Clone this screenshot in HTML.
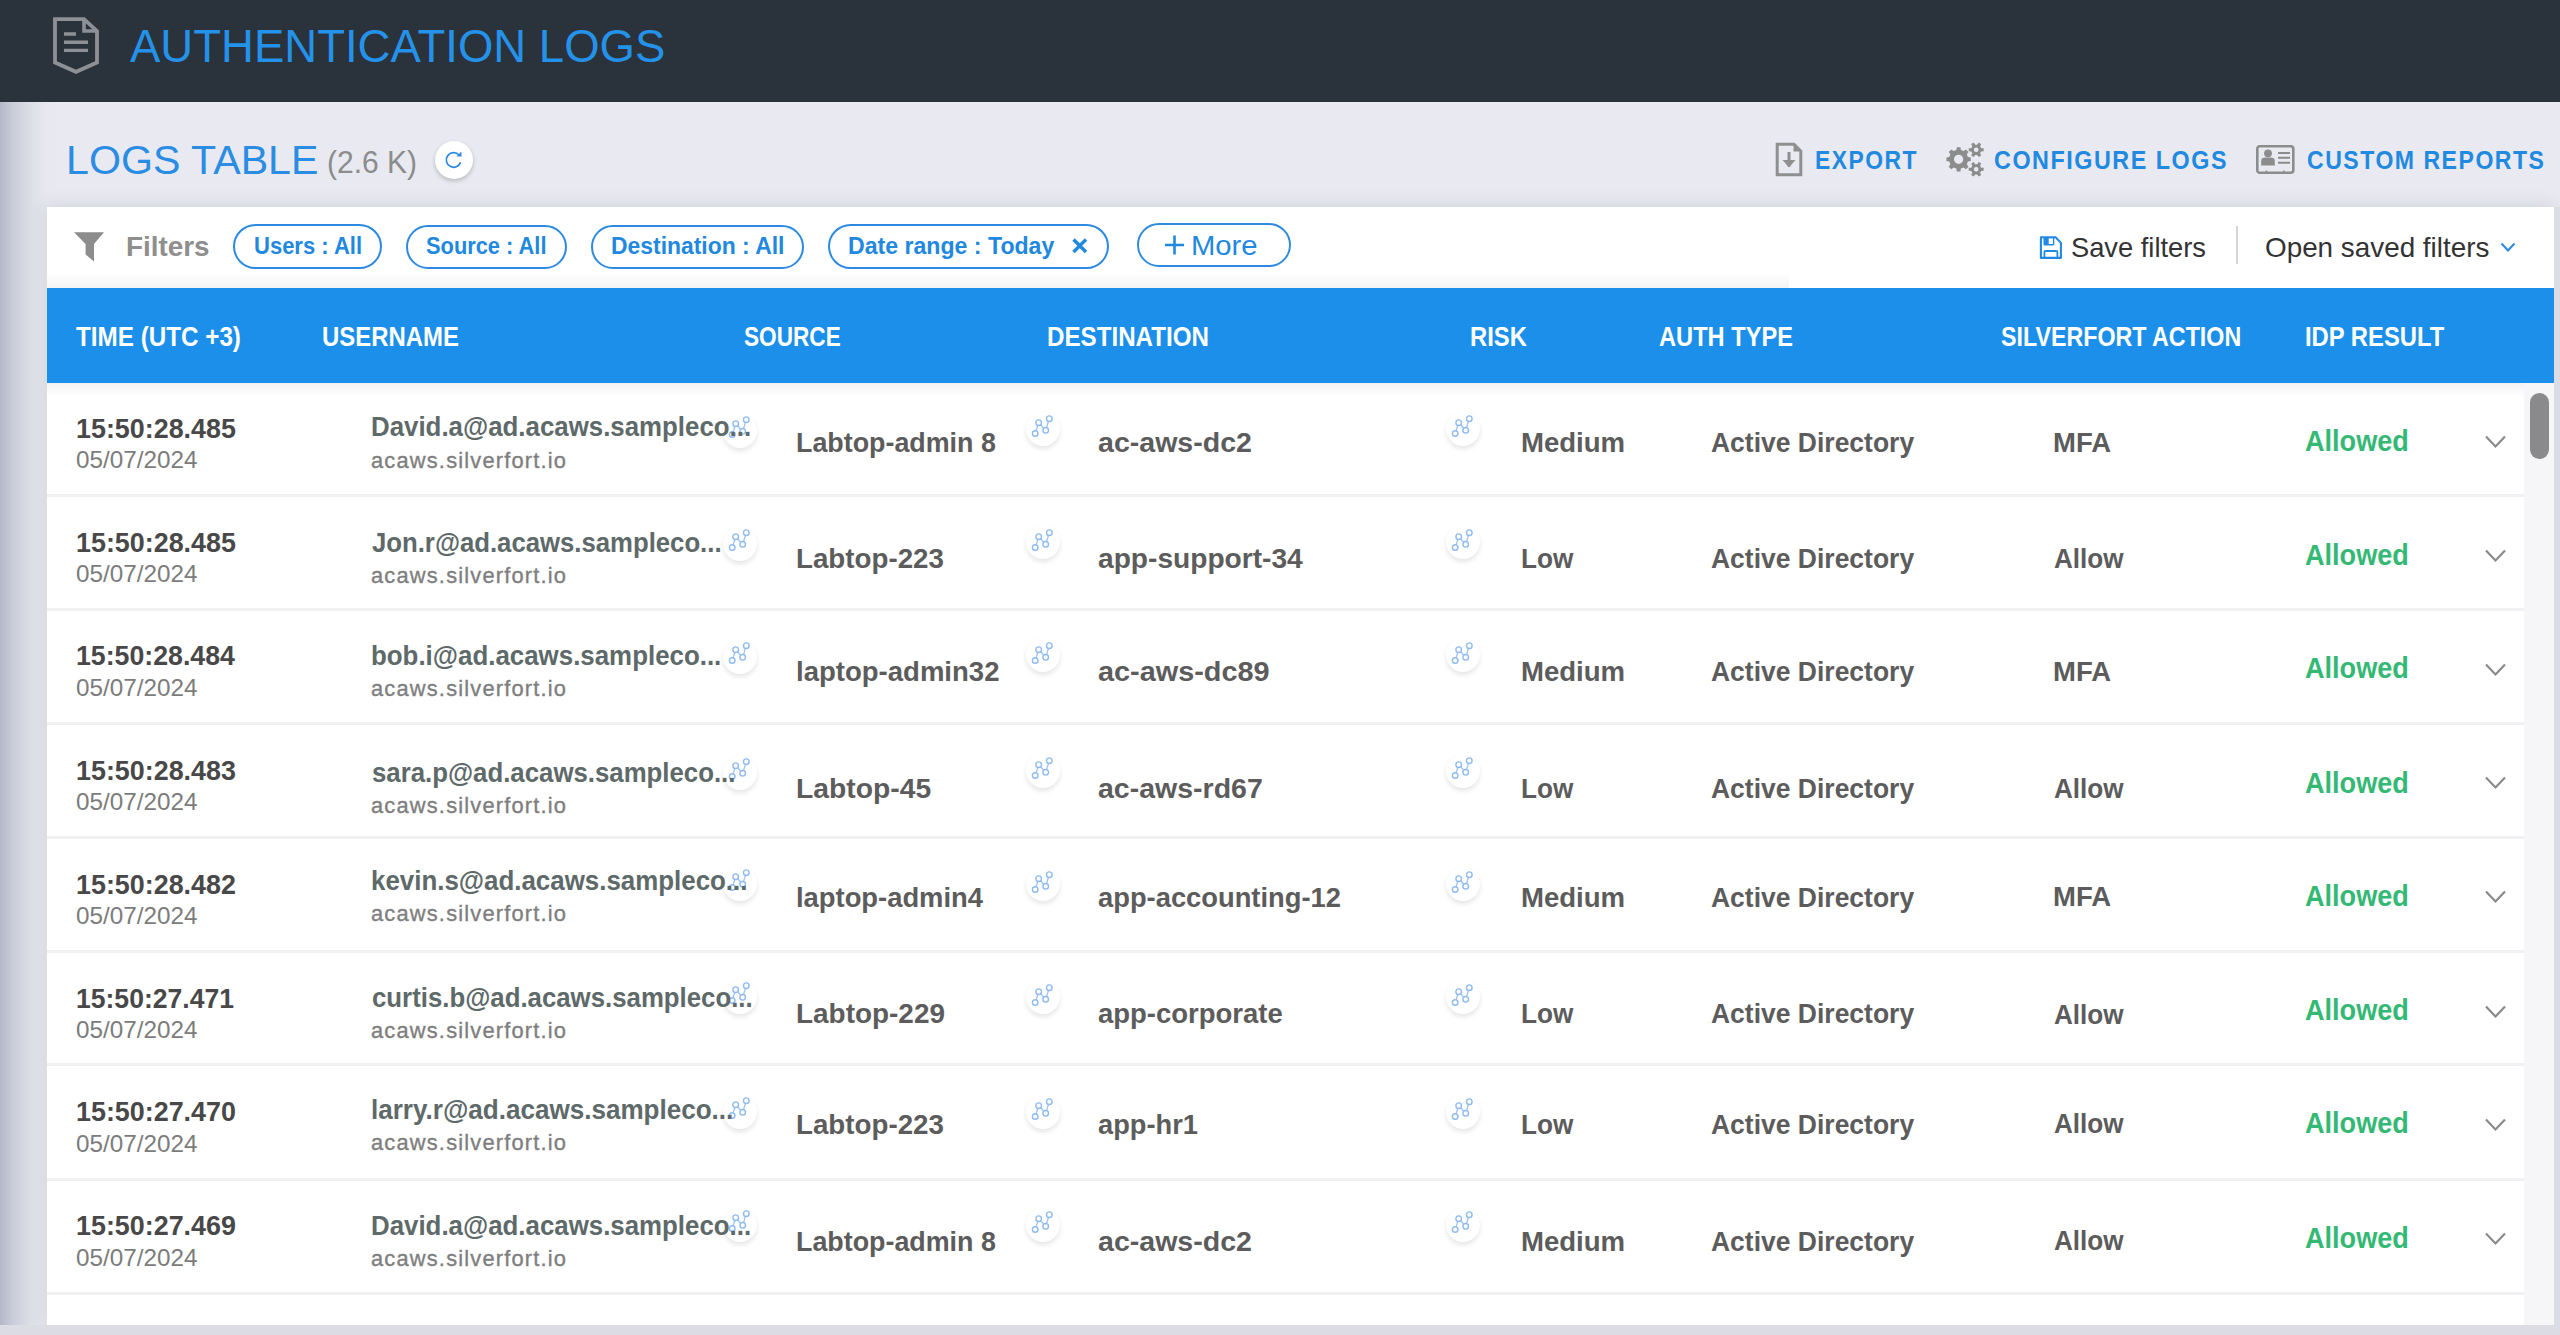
<!DOCTYPE html>
<html><head><meta charset="utf-8"><title>Authentication Logs</title>
<style>
html,body{margin:0;padding:0;width:2560px;height:1335px;overflow:hidden;}
body{position:relative;background:#e9eaf1;font-family:"Liberation Sans",sans-serif;}
.t{position:absolute;white-space:nowrap;transform-origin:0 0;font-family:"Liberation Sans",sans-serif;}
.abs{position:absolute;}
#topbar{position:absolute;left:0;top:0;width:2560px;height:102px;background:#2a323c;}
#leftgrad{position:absolute;left:0;top:102px;width:60px;height:1233px;background:linear-gradient(to right,#b3b7c7 0px,#c9ccd8 12px,#dcdee7 30px,#e8e9f0 48px,#e9eaf1 60px);}
#card{position:absolute;left:47px;top:207px;width:2507px;height:1118px;background:#ffffff;box-shadow:0 -2px 16px rgba(40,45,70,0.13);}
#fbshade{position:absolute;left:47px;top:272px;width:1742px;height:16px;background:linear-gradient(to bottom,rgba(0,0,0,0),rgba(0,0,0,0.045));}
#hshadow{position:absolute;left:47px;top:383px;width:2477px;height:14px;background:linear-gradient(to bottom,rgba(0,0,0,0.05),rgba(0,0,0,0));}
#belowcard{position:absolute;left:0;top:1325px;width:2560px;height:10px;background:#dcdde4;}
#rightcard{position:absolute;left:2554px;top:207px;width:6px;height:1128px;background:#dcdde4;}
#thead{position:absolute;left:47px;top:288px;width:2507px;height:95px;background:#1b8fea;}
.sep{position:absolute;left:47px;width:2477px;height:3px;background:#f0f1f3;}
#track{position:absolute;left:2524px;top:383px;width:30px;height:942px;background:#f6f6f9;}
#thumb{position:absolute;left:2530px;top:393px;width:19px;height:66px;border-radius:10px;background:#8a8a8c;}
.chip{position:absolute;box-sizing:border-box;border:2px solid #2d8ae0;border-radius:24px;}
.circ{position:absolute;border-radius:50%;background:#fff;}
</style></head><body>
<div id="topbar"></div>
<div id="leftgrad"></div>
<div id="card"></div>
<div id="belowcard"></div>
<div id="rightcard"></div>
<div id="fbshade"></div>
<div id="thead"></div>
<div id="hshadow"></div>
<div id="track"></div>
<div id="thumb"></div>
<div class="sep" style="top:494.2px"></div>
<div class="sep" style="top:608.1px"></div>
<div class="sep" style="top:721.8px"></div>
<div class="sep" style="top:836.2px"></div>
<div class="sep" style="top:949.5px"></div>
<div class="sep" style="top:1063.0px"></div>
<div class="sep" style="top:1178.4px"></div>
<div class="sep" style="top:1292.4px"></div>
<svg class="abs" style="left:50px;top:14px" width="54" height="64" viewBox="0 0 54 64">
<path d="M5 5.2 H34 L47 17 V48.5 L26 57.8 L5 48.5 Z" fill="none" stroke="#8d9196" stroke-width="3.8" stroke-linejoin="miter"/>
<path d="M34 5.2 V17 H47" fill="none" stroke="#8d9196" stroke-width="3.6"/>
<path d="M14 20 H26 M14 28.2 H38 M14 36.4 H38" stroke="#8d9196" stroke-width="3.4"/>
</svg>
<div class="circ" style="left:435px;top:141px;width:38px;height:38px;box-shadow:0 2px 4px rgba(0,0,0,0.22)"></div>
<svg class="abs" style="left:441px;top:147px" width="26" height="26" viewBox="0 0 26 26">
<path d="M19.6 15.2 A7.3 7.3 0 1 1 18.2 8.2" fill="none" stroke="#2d8ae0" stroke-width="1.7"/>
<path d="M15.5 9.5 L20.6 9.4 L20.3 4.6 Z" fill="#2d8ae0"/>
</svg>
<svg class="abs" style="left:1774px;top:141px" width="30" height="37" viewBox="0 0 30 37">
<path d="M3.2 3.2 H20 L26.8 10 V33.8 H3.2 Z" fill="none" stroke="#8f8f8f" stroke-width="3"/>
<path d="M19.5 3.2 L26.8 10.5 H19.5 Z" fill="#8f8f8f"/>
<path d="M15 11 V25.5" fill="none" stroke="#8f8f8f" stroke-width="3"/>
<path d="M8.5 19 L15 26.5 L21.5 19 Z" fill="#8f8f8f"/>
</svg>
<svg class="abs" style="left:1940px;top:138px" width="50" height="44" viewBox="0 0 50 44"><path d="M27.92,18.99 L30.77,19.51 L30.77,23.09 L27.92,23.61 L26.82,26.25 L28.47,28.64 L25.94,31.17 L23.55,29.52 L20.91,30.62 L20.39,33.47 L16.81,33.47 L16.29,30.62 L13.65,29.52 L11.26,31.17 L8.73,28.64 L10.38,26.25 L9.28,23.61 L6.43,23.09 L6.43,19.51 L9.28,18.99 L10.38,16.35 L8.73,13.96 L11.26,11.43 L13.65,13.08 L16.29,11.98 L16.81,9.13 L20.39,9.13 L20.91,11.98 L23.55,13.08 L25.94,11.43 L28.47,13.96 L26.82,16.35 Z M23.20,21.30 A4.6,4.6 0 1 0 14.00,21.30 A4.6,4.6 0 1 0 23.20,21.30 Z" fill="#8c8c8c" fill-rule="evenodd"/><path d="M41.13,10.14 L43.66,10.33 L43.66,13.27 L41.13,13.46 L40.10,15.24 L41.20,17.52 L38.65,18.99 L37.23,16.90 L35.17,16.90 L33.75,18.99 L31.20,17.52 L32.30,15.24 L31.27,13.46 L28.74,13.27 L28.74,10.33 L31.27,10.14 L32.30,8.36 L31.20,6.08 L33.75,4.61 L35.17,6.70 L37.23,6.70 L38.65,4.61 L41.20,6.08 L40.10,8.36 Z M38.50,11.80 A2.3,2.3 0 1 0 33.90,11.80 A2.3,2.3 0 1 0 38.50,11.80 Z" fill="#8c8c8c" fill-rule="evenodd"/><path d="M41.13,29.64 L43.66,29.83 L43.66,32.77 L41.13,32.96 L40.10,34.74 L41.20,37.02 L38.65,38.49 L37.23,36.40 L35.17,36.40 L33.75,38.49 L31.20,37.02 L32.30,34.74 L31.27,32.96 L28.74,32.77 L28.74,29.83 L31.27,29.64 L32.30,27.86 L31.20,25.58 L33.75,24.11 L35.17,26.20 L37.23,26.20 L38.65,24.11 L41.20,25.58 L40.10,27.86 Z M38.50,31.30 A2.3,2.3 0 1 0 33.90,31.30 A2.3,2.3 0 1 0 38.50,31.30 Z" fill="#8c8c8c" fill-rule="evenodd"/></svg>
<svg class="abs" style="left:2254px;top:143px" width="44" height="34" viewBox="0 0 44 34">
<rect x="3.3" y="3.3" width="36" height="26.5" rx="2.5" fill="none" stroke="#8c8c8c" stroke-width="2.6"/>
<circle cx="14" cy="10.3" r="3.9" fill="#8c8c8c"/>
<path d="M7.2 22.5 V18 Q7.2 14.4 11 14.4 H17 Q20.8 14.4 20.8 18 V22.5 Z" fill="#8c8c8c"/>
<path d="M24 10 H36 M24 14.8 H36 M24 19.8 H36" stroke="#8c8c8c" stroke-width="1.9"/>
<path d="M12.5 29.8 V27.5 M29.8 29.8 V27.5" stroke="#8c8c8c" stroke-width="1.6"/>
</svg>
<svg class="abs" style="left:72px;top:230px" width="34" height="34" viewBox="0 0 34 34">
<path d="M2 2.3 H32 L22 14 V31.5 L13.6 24.5 V14 Z" fill="#8c8c8c"/>
</svg>
<div class="chip" style="left:233.2px;top:224.2px;width:149.1px;height:44.9px"></div>
<div class="chip" style="left:405.8px;top:224.5px;width:161.5px;height:44.6px"></div>
<div class="chip" style="left:590.6px;top:224.5px;width:213.9px;height:44.6px"></div>
<div class="chip" style="left:828.0px;top:224.4px;width:281.4px;height:44.4px"></div>
<div class="chip" style="left:1136.9px;top:222.5px;width:154.4px;height:44.7px"></div>
<svg class="abs" style="left:1070px;top:237px" width="20" height="18" viewBox="0 0 20 18">
<path d="M3.5 2.5 L16 15 M16 2.5 L3.5 15" stroke="#2188e0" stroke-width="3.4"/>
</svg>
<svg class="abs" style="left:1163px;top:233px" width="23" height="24" viewBox="0 0 23 24">
<path d="M11.5 2.5 V21.5 M2 12 H21" stroke="#2188e0" stroke-width="2.6"/>
</svg>
<svg class="abs" style="left:2037px;top:234px" width="28" height="27" viewBox="0 0 28 27">
<path d="M3.9 3.3 H18.6 L23.9 8.9 V23.9 H3.9 Z" fill="none" stroke="#2188e6" stroke-width="2.1" stroke-linejoin="round"/>
<path d="M6.5 3.3 H17.3 V10.2 Q17.3 11.6 15.9 11.6 H7.9 Q6.5 11.6 6.5 10.2 Z" fill="#2188e6"/>
<rect x="11.7" y="4.4" width="4.2" height="5.6" fill="#fff"/>
<path d="M7.4 23.9 V18.2 Q7.4 17 8.6 17 H19.2 Q20.4 17 20.4 18.2 V23.9" fill="none" stroke="#2188e6" stroke-width="1.8"/>
</svg>
<div class="abs" style="left:2235.5px;top:226px;width:2px;height:38px;background:#d6d6d6"></div>
<svg class="abs" style="left:2499px;top:240px" width="18" height="15" viewBox="0 0 18 15">
<path d="M2.5 3.5 L9 10.5 L15.5 3.5" fill="none" stroke="#2d8ae0" stroke-width="2"/>
</svg>
<div class="circ" style="left:722.7px;top:413.8px;width:34px;height:34px;box-shadow:0 3px 5px rgba(0,0,0,0.10);z-index:1"></div>
<svg class="abs" style="left:724.7px;top:413.8px;z-index:2" width="30" height="28" viewBox="0 0 30 28"><path d="M7.2 20.5 L10.7 9.7 L17.7 17.3 L21.3 5.7" fill="none" stroke="#9dc4f3" stroke-width="1.3"/>
<circle cx="7.2" cy="20.5" r="2.8" fill="#fff" stroke="#8fbbf1" stroke-width="1.4"/>
<circle cx="10.7" cy="9.7" r="2.8" fill="#fff" stroke="#8fbbf1" stroke-width="1.4"/>
<circle cx="17.7" cy="17.3" r="2.8" fill="#fff" stroke="#8fbbf1" stroke-width="1.4"/>
<circle cx="21.3" cy="5.7" r="2.8" fill="#fff" stroke="#8fbbf1" stroke-width="1.4"/></svg>
<div class="circ" style="left:1025.6px;top:411.8px;width:34px;height:34px;box-shadow:0 3px 5px rgba(0,0,0,0.10);z-index:1"></div>
<svg class="abs" style="left:1027.6px;top:413.3px;z-index:2" width="30" height="28" viewBox="0 0 30 28"><path d="M7.2 20.5 L10.7 9.7 L17.7 17.3 L21.3 5.7" fill="none" stroke="#9dc4f3" stroke-width="1.3"/>
<circle cx="7.2" cy="20.5" r="2.8" fill="#fff" stroke="#8fbbf1" stroke-width="1.4"/>
<circle cx="10.7" cy="9.7" r="2.8" fill="#fff" stroke="#8fbbf1" stroke-width="1.4"/>
<circle cx="17.7" cy="17.3" r="2.8" fill="#fff" stroke="#8fbbf1" stroke-width="1.4"/>
<circle cx="21.3" cy="5.7" r="2.8" fill="#fff" stroke="#8fbbf1" stroke-width="1.4"/></svg>
<div class="circ" style="left:1445.8px;top:411.8px;width:34px;height:34px;box-shadow:0 3px 5px rgba(0,0,0,0.10);z-index:1"></div>
<svg class="abs" style="left:1447.8px;top:413.3px;z-index:2" width="30" height="28" viewBox="0 0 30 28"><path d="M7.2 20.5 L10.7 9.7 L17.7 17.3 L21.3 5.7" fill="none" stroke="#9dc4f3" stroke-width="1.3"/>
<circle cx="7.2" cy="20.5" r="2.8" fill="#fff" stroke="#8fbbf1" stroke-width="1.4"/>
<circle cx="10.7" cy="9.7" r="2.8" fill="#fff" stroke="#8fbbf1" stroke-width="1.4"/>
<circle cx="17.7" cy="17.3" r="2.8" fill="#fff" stroke="#8fbbf1" stroke-width="1.4"/>
<circle cx="21.3" cy="5.7" r="2.8" fill="#fff" stroke="#8fbbf1" stroke-width="1.4"/></svg>
<svg class="abs" style="left:2483px;top:432.5px" width="25" height="18" viewBox="0 0 25 18"><path d="M3 3.5 L12.5 13.5 L22 3.5" fill="none" stroke="#8a8a8a" stroke-width="2.2"/></svg>
<div class="circ" style="left:722.7px;top:527.1px;width:34px;height:34px;box-shadow:0 3px 5px rgba(0,0,0,0.10);z-index:1"></div>
<svg class="abs" style="left:724.7px;top:527.1px;z-index:2" width="30" height="28" viewBox="0 0 30 28"><path d="M7.2 20.5 L10.7 9.7 L17.7 17.3 L21.3 5.7" fill="none" stroke="#9dc4f3" stroke-width="1.3"/>
<circle cx="7.2" cy="20.5" r="2.8" fill="#fff" stroke="#8fbbf1" stroke-width="1.4"/>
<circle cx="10.7" cy="9.7" r="2.8" fill="#fff" stroke="#8fbbf1" stroke-width="1.4"/>
<circle cx="17.7" cy="17.3" r="2.8" fill="#fff" stroke="#8fbbf1" stroke-width="1.4"/>
<circle cx="21.3" cy="5.7" r="2.8" fill="#fff" stroke="#8fbbf1" stroke-width="1.4"/></svg>
<div class="circ" style="left:1025.6px;top:525.1px;width:34px;height:34px;box-shadow:0 3px 5px rgba(0,0,0,0.10);z-index:1"></div>
<svg class="abs" style="left:1027.6px;top:526.6px;z-index:2" width="30" height="28" viewBox="0 0 30 28"><path d="M7.2 20.5 L10.7 9.7 L17.7 17.3 L21.3 5.7" fill="none" stroke="#9dc4f3" stroke-width="1.3"/>
<circle cx="7.2" cy="20.5" r="2.8" fill="#fff" stroke="#8fbbf1" stroke-width="1.4"/>
<circle cx="10.7" cy="9.7" r="2.8" fill="#fff" stroke="#8fbbf1" stroke-width="1.4"/>
<circle cx="17.7" cy="17.3" r="2.8" fill="#fff" stroke="#8fbbf1" stroke-width="1.4"/>
<circle cx="21.3" cy="5.7" r="2.8" fill="#fff" stroke="#8fbbf1" stroke-width="1.4"/></svg>
<div class="circ" style="left:1445.8px;top:525.1px;width:34px;height:34px;box-shadow:0 3px 5px rgba(0,0,0,0.10);z-index:1"></div>
<svg class="abs" style="left:1447.8px;top:526.6px;z-index:2" width="30" height="28" viewBox="0 0 30 28"><path d="M7.2 20.5 L10.7 9.7 L17.7 17.3 L21.3 5.7" fill="none" stroke="#9dc4f3" stroke-width="1.3"/>
<circle cx="7.2" cy="20.5" r="2.8" fill="#fff" stroke="#8fbbf1" stroke-width="1.4"/>
<circle cx="10.7" cy="9.7" r="2.8" fill="#fff" stroke="#8fbbf1" stroke-width="1.4"/>
<circle cx="17.7" cy="17.3" r="2.8" fill="#fff" stroke="#8fbbf1" stroke-width="1.4"/>
<circle cx="21.3" cy="5.7" r="2.8" fill="#fff" stroke="#8fbbf1" stroke-width="1.4"/></svg>
<svg class="abs" style="left:2483px;top:546.9px" width="25" height="18" viewBox="0 0 25 18"><path d="M3 3.5 L12.5 13.5 L22 3.5" fill="none" stroke="#8a8a8a" stroke-width="2.2"/></svg>
<div class="circ" style="left:722.7px;top:640.4px;width:34px;height:34px;box-shadow:0 3px 5px rgba(0,0,0,0.10);z-index:1"></div>
<svg class="abs" style="left:724.7px;top:640.4px;z-index:2" width="30" height="28" viewBox="0 0 30 28"><path d="M7.2 20.5 L10.7 9.7 L17.7 17.3 L21.3 5.7" fill="none" stroke="#9dc4f3" stroke-width="1.3"/>
<circle cx="7.2" cy="20.5" r="2.8" fill="#fff" stroke="#8fbbf1" stroke-width="1.4"/>
<circle cx="10.7" cy="9.7" r="2.8" fill="#fff" stroke="#8fbbf1" stroke-width="1.4"/>
<circle cx="17.7" cy="17.3" r="2.8" fill="#fff" stroke="#8fbbf1" stroke-width="1.4"/>
<circle cx="21.3" cy="5.7" r="2.8" fill="#fff" stroke="#8fbbf1" stroke-width="1.4"/></svg>
<div class="circ" style="left:1025.6px;top:638.4px;width:34px;height:34px;box-shadow:0 3px 5px rgba(0,0,0,0.10);z-index:1"></div>
<svg class="abs" style="left:1027.6px;top:639.9px;z-index:2" width="30" height="28" viewBox="0 0 30 28"><path d="M7.2 20.5 L10.7 9.7 L17.7 17.3 L21.3 5.7" fill="none" stroke="#9dc4f3" stroke-width="1.3"/>
<circle cx="7.2" cy="20.5" r="2.8" fill="#fff" stroke="#8fbbf1" stroke-width="1.4"/>
<circle cx="10.7" cy="9.7" r="2.8" fill="#fff" stroke="#8fbbf1" stroke-width="1.4"/>
<circle cx="17.7" cy="17.3" r="2.8" fill="#fff" stroke="#8fbbf1" stroke-width="1.4"/>
<circle cx="21.3" cy="5.7" r="2.8" fill="#fff" stroke="#8fbbf1" stroke-width="1.4"/></svg>
<div class="circ" style="left:1445.8px;top:638.4px;width:34px;height:34px;box-shadow:0 3px 5px rgba(0,0,0,0.10);z-index:1"></div>
<svg class="abs" style="left:1447.8px;top:639.9px;z-index:2" width="30" height="28" viewBox="0 0 30 28"><path d="M7.2 20.5 L10.7 9.7 L17.7 17.3 L21.3 5.7" fill="none" stroke="#9dc4f3" stroke-width="1.3"/>
<circle cx="7.2" cy="20.5" r="2.8" fill="#fff" stroke="#8fbbf1" stroke-width="1.4"/>
<circle cx="10.7" cy="9.7" r="2.8" fill="#fff" stroke="#8fbbf1" stroke-width="1.4"/>
<circle cx="17.7" cy="17.3" r="2.8" fill="#fff" stroke="#8fbbf1" stroke-width="1.4"/>
<circle cx="21.3" cy="5.7" r="2.8" fill="#fff" stroke="#8fbbf1" stroke-width="1.4"/></svg>
<svg class="abs" style="left:2483px;top:660.6px" width="25" height="18" viewBox="0 0 25 18"><path d="M3 3.5 L12.5 13.5 L22 3.5" fill="none" stroke="#8a8a8a" stroke-width="2.2"/></svg>
<div class="circ" style="left:722.7px;top:755.8px;width:34px;height:34px;box-shadow:0 3px 5px rgba(0,0,0,0.10);z-index:1"></div>
<svg class="abs" style="left:724.7px;top:755.8px;z-index:2" width="30" height="28" viewBox="0 0 30 28"><path d="M7.2 20.5 L10.7 9.7 L17.7 17.3 L21.3 5.7" fill="none" stroke="#9dc4f3" stroke-width="1.3"/>
<circle cx="7.2" cy="20.5" r="2.8" fill="#fff" stroke="#8fbbf1" stroke-width="1.4"/>
<circle cx="10.7" cy="9.7" r="2.8" fill="#fff" stroke="#8fbbf1" stroke-width="1.4"/>
<circle cx="17.7" cy="17.3" r="2.8" fill="#fff" stroke="#8fbbf1" stroke-width="1.4"/>
<circle cx="21.3" cy="5.7" r="2.8" fill="#fff" stroke="#8fbbf1" stroke-width="1.4"/></svg>
<div class="circ" style="left:1025.6px;top:753.8px;width:34px;height:34px;box-shadow:0 3px 5px rgba(0,0,0,0.10);z-index:1"></div>
<svg class="abs" style="left:1027.6px;top:755.3px;z-index:2" width="30" height="28" viewBox="0 0 30 28"><path d="M7.2 20.5 L10.7 9.7 L17.7 17.3 L21.3 5.7" fill="none" stroke="#9dc4f3" stroke-width="1.3"/>
<circle cx="7.2" cy="20.5" r="2.8" fill="#fff" stroke="#8fbbf1" stroke-width="1.4"/>
<circle cx="10.7" cy="9.7" r="2.8" fill="#fff" stroke="#8fbbf1" stroke-width="1.4"/>
<circle cx="17.7" cy="17.3" r="2.8" fill="#fff" stroke="#8fbbf1" stroke-width="1.4"/>
<circle cx="21.3" cy="5.7" r="2.8" fill="#fff" stroke="#8fbbf1" stroke-width="1.4"/></svg>
<div class="circ" style="left:1445.8px;top:753.8px;width:34px;height:34px;box-shadow:0 3px 5px rgba(0,0,0,0.10);z-index:1"></div>
<svg class="abs" style="left:1447.8px;top:755.3px;z-index:2" width="30" height="28" viewBox="0 0 30 28"><path d="M7.2 20.5 L10.7 9.7 L17.7 17.3 L21.3 5.7" fill="none" stroke="#9dc4f3" stroke-width="1.3"/>
<circle cx="7.2" cy="20.5" r="2.8" fill="#fff" stroke="#8fbbf1" stroke-width="1.4"/>
<circle cx="10.7" cy="9.7" r="2.8" fill="#fff" stroke="#8fbbf1" stroke-width="1.4"/>
<circle cx="17.7" cy="17.3" r="2.8" fill="#fff" stroke="#8fbbf1" stroke-width="1.4"/>
<circle cx="21.3" cy="5.7" r="2.8" fill="#fff" stroke="#8fbbf1" stroke-width="1.4"/></svg>
<svg class="abs" style="left:2483px;top:774.3px" width="25" height="18" viewBox="0 0 25 18"><path d="M3 3.5 L12.5 13.5 L22 3.5" fill="none" stroke="#8a8a8a" stroke-width="2.2"/></svg>
<div class="circ" style="left:722.7px;top:867.1px;width:34px;height:34px;box-shadow:0 3px 5px rgba(0,0,0,0.10);z-index:1"></div>
<svg class="abs" style="left:724.7px;top:867.1px;z-index:2" width="30" height="28" viewBox="0 0 30 28"><path d="M7.2 20.5 L10.7 9.7 L17.7 17.3 L21.3 5.7" fill="none" stroke="#9dc4f3" stroke-width="1.3"/>
<circle cx="7.2" cy="20.5" r="2.8" fill="#fff" stroke="#8fbbf1" stroke-width="1.4"/>
<circle cx="10.7" cy="9.7" r="2.8" fill="#fff" stroke="#8fbbf1" stroke-width="1.4"/>
<circle cx="17.7" cy="17.3" r="2.8" fill="#fff" stroke="#8fbbf1" stroke-width="1.4"/>
<circle cx="21.3" cy="5.7" r="2.8" fill="#fff" stroke="#8fbbf1" stroke-width="1.4"/></svg>
<div class="circ" style="left:1025.6px;top:867.1px;width:34px;height:34px;box-shadow:0 3px 5px rgba(0,0,0,0.10);z-index:1"></div>
<svg class="abs" style="left:1027.6px;top:868.6px;z-index:2" width="30" height="28" viewBox="0 0 30 28"><path d="M7.2 20.5 L10.7 9.7 L17.7 17.3 L21.3 5.7" fill="none" stroke="#9dc4f3" stroke-width="1.3"/>
<circle cx="7.2" cy="20.5" r="2.8" fill="#fff" stroke="#8fbbf1" stroke-width="1.4"/>
<circle cx="10.7" cy="9.7" r="2.8" fill="#fff" stroke="#8fbbf1" stroke-width="1.4"/>
<circle cx="17.7" cy="17.3" r="2.8" fill="#fff" stroke="#8fbbf1" stroke-width="1.4"/>
<circle cx="21.3" cy="5.7" r="2.8" fill="#fff" stroke="#8fbbf1" stroke-width="1.4"/></svg>
<div class="circ" style="left:1445.8px;top:867.1px;width:34px;height:34px;box-shadow:0 3px 5px rgba(0,0,0,0.10);z-index:1"></div>
<svg class="abs" style="left:1447.8px;top:868.6px;z-index:2" width="30" height="28" viewBox="0 0 30 28"><path d="M7.2 20.5 L10.7 9.7 L17.7 17.3 L21.3 5.7" fill="none" stroke="#9dc4f3" stroke-width="1.3"/>
<circle cx="7.2" cy="20.5" r="2.8" fill="#fff" stroke="#8fbbf1" stroke-width="1.4"/>
<circle cx="10.7" cy="9.7" r="2.8" fill="#fff" stroke="#8fbbf1" stroke-width="1.4"/>
<circle cx="17.7" cy="17.3" r="2.8" fill="#fff" stroke="#8fbbf1" stroke-width="1.4"/>
<circle cx="21.3" cy="5.7" r="2.8" fill="#fff" stroke="#8fbbf1" stroke-width="1.4"/></svg>
<svg class="abs" style="left:2483px;top:888.0px" width="25" height="18" viewBox="0 0 25 18"><path d="M3 3.5 L12.5 13.5 L22 3.5" fill="none" stroke="#8a8a8a" stroke-width="2.2"/></svg>
<div class="circ" style="left:722.7px;top:980.4px;width:34px;height:34px;box-shadow:0 3px 5px rgba(0,0,0,0.10);z-index:1"></div>
<svg class="abs" style="left:724.7px;top:980.4px;z-index:2" width="30" height="28" viewBox="0 0 30 28"><path d="M7.2 20.5 L10.7 9.7 L17.7 17.3 L21.3 5.7" fill="none" stroke="#9dc4f3" stroke-width="1.3"/>
<circle cx="7.2" cy="20.5" r="2.8" fill="#fff" stroke="#8fbbf1" stroke-width="1.4"/>
<circle cx="10.7" cy="9.7" r="2.8" fill="#fff" stroke="#8fbbf1" stroke-width="1.4"/>
<circle cx="17.7" cy="17.3" r="2.8" fill="#fff" stroke="#8fbbf1" stroke-width="1.4"/>
<circle cx="21.3" cy="5.7" r="2.8" fill="#fff" stroke="#8fbbf1" stroke-width="1.4"/></svg>
<div class="circ" style="left:1025.6px;top:980.4px;width:34px;height:34px;box-shadow:0 3px 5px rgba(0,0,0,0.10);z-index:1"></div>
<svg class="abs" style="left:1027.6px;top:981.9px;z-index:2" width="30" height="28" viewBox="0 0 30 28"><path d="M7.2 20.5 L10.7 9.7 L17.7 17.3 L21.3 5.7" fill="none" stroke="#9dc4f3" stroke-width="1.3"/>
<circle cx="7.2" cy="20.5" r="2.8" fill="#fff" stroke="#8fbbf1" stroke-width="1.4"/>
<circle cx="10.7" cy="9.7" r="2.8" fill="#fff" stroke="#8fbbf1" stroke-width="1.4"/>
<circle cx="17.7" cy="17.3" r="2.8" fill="#fff" stroke="#8fbbf1" stroke-width="1.4"/>
<circle cx="21.3" cy="5.7" r="2.8" fill="#fff" stroke="#8fbbf1" stroke-width="1.4"/></svg>
<div class="circ" style="left:1445.8px;top:980.4px;width:34px;height:34px;box-shadow:0 3px 5px rgba(0,0,0,0.10);z-index:1"></div>
<svg class="abs" style="left:1447.8px;top:981.9px;z-index:2" width="30" height="28" viewBox="0 0 30 28"><path d="M7.2 20.5 L10.7 9.7 L17.7 17.3 L21.3 5.7" fill="none" stroke="#9dc4f3" stroke-width="1.3"/>
<circle cx="7.2" cy="20.5" r="2.8" fill="#fff" stroke="#8fbbf1" stroke-width="1.4"/>
<circle cx="10.7" cy="9.7" r="2.8" fill="#fff" stroke="#8fbbf1" stroke-width="1.4"/>
<circle cx="17.7" cy="17.3" r="2.8" fill="#fff" stroke="#8fbbf1" stroke-width="1.4"/>
<circle cx="21.3" cy="5.7" r="2.8" fill="#fff" stroke="#8fbbf1" stroke-width="1.4"/></svg>
<svg class="abs" style="left:2483px;top:1002.5px" width="25" height="18" viewBox="0 0 25 18"><path d="M3 3.5 L12.5 13.5 L22 3.5" fill="none" stroke="#8a8a8a" stroke-width="2.2"/></svg>
<div class="circ" style="left:722.7px;top:1094.5px;width:34px;height:34px;box-shadow:0 3px 5px rgba(0,0,0,0.10);z-index:1"></div>
<svg class="abs" style="left:724.7px;top:1094.5px;z-index:2" width="30" height="28" viewBox="0 0 30 28"><path d="M7.2 20.5 L10.7 9.7 L17.7 17.3 L21.3 5.7" fill="none" stroke="#9dc4f3" stroke-width="1.3"/>
<circle cx="7.2" cy="20.5" r="2.8" fill="#fff" stroke="#8fbbf1" stroke-width="1.4"/>
<circle cx="10.7" cy="9.7" r="2.8" fill="#fff" stroke="#8fbbf1" stroke-width="1.4"/>
<circle cx="17.7" cy="17.3" r="2.8" fill="#fff" stroke="#8fbbf1" stroke-width="1.4"/>
<circle cx="21.3" cy="5.7" r="2.8" fill="#fff" stroke="#8fbbf1" stroke-width="1.4"/></svg>
<div class="circ" style="left:1025.6px;top:1094.5px;width:34px;height:34px;box-shadow:0 3px 5px rgba(0,0,0,0.10);z-index:1"></div>
<svg class="abs" style="left:1027.6px;top:1096.0px;z-index:2" width="30" height="28" viewBox="0 0 30 28"><path d="M7.2 20.5 L10.7 9.7 L17.7 17.3 L21.3 5.7" fill="none" stroke="#9dc4f3" stroke-width="1.3"/>
<circle cx="7.2" cy="20.5" r="2.8" fill="#fff" stroke="#8fbbf1" stroke-width="1.4"/>
<circle cx="10.7" cy="9.7" r="2.8" fill="#fff" stroke="#8fbbf1" stroke-width="1.4"/>
<circle cx="17.7" cy="17.3" r="2.8" fill="#fff" stroke="#8fbbf1" stroke-width="1.4"/>
<circle cx="21.3" cy="5.7" r="2.8" fill="#fff" stroke="#8fbbf1" stroke-width="1.4"/></svg>
<div class="circ" style="left:1445.8px;top:1094.5px;width:34px;height:34px;box-shadow:0 3px 5px rgba(0,0,0,0.10);z-index:1"></div>
<svg class="abs" style="left:1447.8px;top:1096.0px;z-index:2" width="30" height="28" viewBox="0 0 30 28"><path d="M7.2 20.5 L10.7 9.7 L17.7 17.3 L21.3 5.7" fill="none" stroke="#9dc4f3" stroke-width="1.3"/>
<circle cx="7.2" cy="20.5" r="2.8" fill="#fff" stroke="#8fbbf1" stroke-width="1.4"/>
<circle cx="10.7" cy="9.7" r="2.8" fill="#fff" stroke="#8fbbf1" stroke-width="1.4"/>
<circle cx="17.7" cy="17.3" r="2.8" fill="#fff" stroke="#8fbbf1" stroke-width="1.4"/>
<circle cx="21.3" cy="5.7" r="2.8" fill="#fff" stroke="#8fbbf1" stroke-width="1.4"/></svg>
<svg class="abs" style="left:2483px;top:1115.8px" width="25" height="18" viewBox="0 0 25 18"><path d="M3 3.5 L12.5 13.5 L22 3.5" fill="none" stroke="#8a8a8a" stroke-width="2.2"/></svg>
<div class="circ" style="left:722.7px;top:1207.9px;width:34px;height:34px;box-shadow:0 3px 5px rgba(0,0,0,0.10);z-index:1"></div>
<svg class="abs" style="left:724.7px;top:1207.9px;z-index:2" width="30" height="28" viewBox="0 0 30 28"><path d="M7.2 20.5 L10.7 9.7 L17.7 17.3 L21.3 5.7" fill="none" stroke="#9dc4f3" stroke-width="1.3"/>
<circle cx="7.2" cy="20.5" r="2.8" fill="#fff" stroke="#8fbbf1" stroke-width="1.4"/>
<circle cx="10.7" cy="9.7" r="2.8" fill="#fff" stroke="#8fbbf1" stroke-width="1.4"/>
<circle cx="17.7" cy="17.3" r="2.8" fill="#fff" stroke="#8fbbf1" stroke-width="1.4"/>
<circle cx="21.3" cy="5.7" r="2.8" fill="#fff" stroke="#8fbbf1" stroke-width="1.4"/></svg>
<div class="circ" style="left:1025.6px;top:1207.9px;width:34px;height:34px;box-shadow:0 3px 5px rgba(0,0,0,0.10);z-index:1"></div>
<svg class="abs" style="left:1027.6px;top:1209.4px;z-index:2" width="30" height="28" viewBox="0 0 30 28"><path d="M7.2 20.5 L10.7 9.7 L17.7 17.3 L21.3 5.7" fill="none" stroke="#9dc4f3" stroke-width="1.3"/>
<circle cx="7.2" cy="20.5" r="2.8" fill="#fff" stroke="#8fbbf1" stroke-width="1.4"/>
<circle cx="10.7" cy="9.7" r="2.8" fill="#fff" stroke="#8fbbf1" stroke-width="1.4"/>
<circle cx="17.7" cy="17.3" r="2.8" fill="#fff" stroke="#8fbbf1" stroke-width="1.4"/>
<circle cx="21.3" cy="5.7" r="2.8" fill="#fff" stroke="#8fbbf1" stroke-width="1.4"/></svg>
<div class="circ" style="left:1445.8px;top:1207.9px;width:34px;height:34px;box-shadow:0 3px 5px rgba(0,0,0,0.10);z-index:1"></div>
<svg class="abs" style="left:1447.8px;top:1209.4px;z-index:2" width="30" height="28" viewBox="0 0 30 28"><path d="M7.2 20.5 L10.7 9.7 L17.7 17.3 L21.3 5.7" fill="none" stroke="#9dc4f3" stroke-width="1.3"/>
<circle cx="7.2" cy="20.5" r="2.8" fill="#fff" stroke="#8fbbf1" stroke-width="1.4"/>
<circle cx="10.7" cy="9.7" r="2.8" fill="#fff" stroke="#8fbbf1" stroke-width="1.4"/>
<circle cx="17.7" cy="17.3" r="2.8" fill="#fff" stroke="#8fbbf1" stroke-width="1.4"/>
<circle cx="21.3" cy="5.7" r="2.8" fill="#fff" stroke="#8fbbf1" stroke-width="1.4"/></svg>
<svg class="abs" style="left:2483px;top:1230.2px" width="25" height="18" viewBox="0 0 25 18"><path d="M3 3.5 L12.5 13.5 L22 3.5" fill="none" stroke="#8a8a8a" stroke-width="2.2"/></svg>
<div class="t" style="left:129.50px;top:23.00px;font-size:46.5px;line-height:46.5px;font-weight:400;color:#2592e9;transform:scaleX(0.9789);">AUTHENTICATION LOGS</div>
<div class="t" style="left:65.69px;top:139.50px;font-size:41px;line-height:41px;font-weight:400;color:#2a8ce2;transform:scaleX(1.0040);">LOGS TABLE</div>
<div class="t" style="left:327.03px;top:146.60px;font-size:30.5px;line-height:30.5px;font-weight:400;color:#8c8c8c;transform:scaleX(0.9841);">(2.6 K)</div>
<div class="t" style="left:1815.24px;top:147.00px;font-size:26px;line-height:26px;font-weight:700;color:#2189e0;letter-spacing:1.7px;transform:scaleX(0.8796);">EXPORT</div>
<div class="t" style="left:1994.10px;top:147.30px;font-size:26px;line-height:26px;font-weight:700;color:#2189e0;letter-spacing:1.7px;transform:scaleX(0.8977);">CONFIGURE LOGS</div>
<div class="t" style="left:2306.61px;top:146.80px;font-size:26px;line-height:26px;font-weight:700;color:#2189e0;letter-spacing:1.7px;transform:scaleX(0.8868);">CUSTOM REPORTS</div>
<div class="t" style="left:125.97px;top:232.70px;font-size:27.5px;line-height:27.5px;font-weight:700;color:#8e8e8e;transform:scaleX(1.0125);">Filters</div>
<div class="t" style="left:253.80px;top:234.40px;font-size:24.5px;line-height:24.5px;font-weight:700;color:#2188e0;transform:scaleX(0.8983);">Users : All</div>
<div class="t" style="left:425.86px;top:234.20px;font-size:24.5px;line-height:24.5px;font-weight:700;color:#2188e0;transform:scaleX(0.8910);">Source : All</div>
<div class="t" style="left:611.03px;top:234.30px;font-size:24.5px;line-height:24.5px;font-weight:700;color:#2188e0;transform:scaleX(0.9346);">Destination : All</div>
<div class="t" style="left:848.11px;top:234.30px;font-size:24.5px;line-height:24.5px;font-weight:700;color:#2188e0;transform:scaleX(0.9433);">Date range : Today</div>
<div class="t" style="left:1190.83px;top:233.30px;font-size:27px;line-height:27px;font-weight:400;color:#2188e0;transform:scaleX(1.0831);">More</div>
<div class="t" style="left:2071.03px;top:234.20px;font-size:28px;line-height:28px;font-weight:400;color:#333333;transform:scaleX(0.9745);">Save filters</div>
<div class="t" style="left:2265.01px;top:234.20px;font-size:28px;line-height:28px;font-weight:400;color:#333333;transform:scaleX(0.9942);">Open saved filters</div>
<div class="t" style="left:76.30px;top:321.60px;font-size:28.3px;line-height:28.3px;font-weight:700;color:#ffffff;transform:scaleX(0.8565);">TIME (UTC +3)</div>
<div class="t" style="left:322.11px;top:321.60px;font-size:28.3px;line-height:28.3px;font-weight:700;color:#ffffff;transform:scaleX(0.8453);">USERNAME</div>
<div class="t" style="left:743.60px;top:321.60px;font-size:28.3px;line-height:28.3px;font-weight:700;color:#ffffff;transform:scaleX(0.7992);">SOURCE</div>
<div class="t" style="left:1047.29px;top:321.60px;font-size:28.3px;line-height:28.3px;font-weight:700;color:#ffffff;transform:scaleX(0.8538);">DESTINATION</div>
<div class="t" style="left:1469.57px;top:321.60px;font-size:28.3px;line-height:28.3px;font-weight:700;color:#ffffff;transform:scaleX(0.8408);">RISK</div>
<div class="t" style="left:1659.46px;top:321.60px;font-size:28.3px;line-height:28.3px;font-weight:700;color:#ffffff;transform:scaleX(0.8354);">AUTH TYPE</div>
<div class="t" style="left:2000.78px;top:321.60px;font-size:28.3px;line-height:28.3px;font-weight:700;color:#ffffff;transform:scaleX(0.8214);">SILVERFORT ACTION</div>
<div class="t" style="left:2304.62px;top:321.60px;font-size:28.3px;line-height:28.3px;font-weight:700;color:#ffffff;transform:scaleX(0.8411);">IDP RESULT</div>
<div class="t" style="left:76.28px;top:414.60px;font-size:28px;line-height:28px;font-weight:700;color:#484848;transform:scaleX(0.9598);">15:50:28.485</div>
<div class="t" style="left:75.78px;top:448.40px;font-size:23.8px;line-height:23.8px;font-weight:400;color:#7c7c7c;transform:scaleX(1.0195);">05/07/2024</div>
<div class="t" style="left:370.95px;top:413.30px;font-size:28px;line-height:28px;font-weight:700;color:#5e6969;transform:scaleX(0.9233);z-index:3">David.a@ad.acaws.sampleco...</div>
<div class="t" style="left:371.21px;top:449.90px;font-size:22px;line-height:22px;font-weight:400;color:#7e7e7e;letter-spacing:1.2px;transform:scaleX(0.9928);-webkit-text-stroke:0.35px #7e7e7e">acaws.silverfort.io</div>
<div class="t" style="left:796.08px;top:429.00px;font-size:28px;line-height:28px;font-weight:700;color:#5c5c5c;transform:scaleX(0.9587);">Labtop-admin 8</div>
<div class="t" style="left:1097.73px;top:429.00px;font-size:28px;line-height:28px;font-weight:700;color:#5c5c5c;transform:scaleX(1.0198);">ac-aws-dc2</div>
<div class="t" style="left:1520.63px;top:429.00px;font-size:28px;line-height:28px;font-weight:700;color:#5c5c5c;transform:scaleX(0.9843);">Medium</div>
<div class="t" style="left:1710.65px;top:429.00px;font-size:28px;line-height:28px;font-weight:700;color:#5c5c5c;transform:scaleX(0.9458);">Active Directory</div>
<div class="t" style="left:2053.04px;top:429.40px;font-size:28px;line-height:28px;font-weight:700;color:#5c5c5c;transform:scaleX(0.9825);">MFA</div>
<div class="t" style="left:2304.77px;top:427.00px;font-size:29px;line-height:29px;font-weight:700;color:#33b974;transform:scaleX(0.9343);">Allowed</div>
<div class="t" style="left:76.28px;top:528.70px;font-size:28px;line-height:28px;font-weight:700;color:#484848;transform:scaleX(0.9598);">15:50:28.485</div>
<div class="t" style="left:75.78px;top:561.60px;font-size:23.8px;line-height:23.8px;font-weight:400;color:#7c7c7c;transform:scaleX(1.0195);">05/07/2024</div>
<div class="t" style="left:371.88px;top:529.30px;font-size:28px;line-height:28px;font-weight:700;color:#5e6969;transform:scaleX(0.9185);z-index:3">Jon.r@ad.acaws.sampleco...</div>
<div class="t" style="left:371.21px;top:565.10px;font-size:22px;line-height:22px;font-weight:400;color:#7e7e7e;letter-spacing:1.2px;transform:scaleX(0.9928);-webkit-text-stroke:0.35px #7e7e7e">acaws.silverfort.io</div>
<div class="t" style="left:796.02px;top:545.00px;font-size:28px;line-height:28px;font-weight:700;color:#5c5c5c;transform:scaleX(0.9905);">Labtop-223</div>
<div class="t" style="left:1097.75px;top:545.00px;font-size:28px;line-height:28px;font-weight:700;color:#5c5c5c;transform:scaleX(1.0047);">app-support-34</div>
<div class="t" style="left:1520.73px;top:545.00px;font-size:28px;line-height:28px;font-weight:700;color:#5c5c5c;transform:scaleX(0.9333);">Low</div>
<div class="t" style="left:1710.65px;top:545.00px;font-size:28px;line-height:28px;font-weight:700;color:#5c5c5c;transform:scaleX(0.9458);">Active Directory</div>
<div class="t" style="left:2054.07px;top:545.20px;font-size:28px;line-height:28px;font-weight:700;color:#5c5c5c;transform:scaleX(0.9324);">Allow</div>
<div class="t" style="left:2304.77px;top:541.40px;font-size:29px;line-height:29px;font-weight:700;color:#33b974;transform:scaleX(0.9343);">Allowed</div>
<div class="t" style="left:76.29px;top:642.30px;font-size:28px;line-height:28px;font-weight:700;color:#484848;transform:scaleX(0.9539);">15:50:28.484</div>
<div class="t" style="left:75.78px;top:675.70px;font-size:23.8px;line-height:23.8px;font-weight:400;color:#7c7c7c;transform:scaleX(1.0195);">05/07/2024</div>
<div class="t" style="left:370.95px;top:641.80px;font-size:28px;line-height:28px;font-weight:700;color:#5e6969;transform:scaleX(0.9243);z-index:3">bob.i@ad.acaws.sampleco...</div>
<div class="t" style="left:371.21px;top:678.40px;font-size:22px;line-height:22px;font-weight:400;color:#7e7e7e;letter-spacing:1.2px;transform:scaleX(0.9928);-webkit-text-stroke:0.35px #7e7e7e">acaws.silverfort.io</div>
<div class="t" style="left:796.03px;top:657.50px;font-size:28px;line-height:28px;font-weight:700;color:#5c5c5c;transform:scaleX(0.9833);">laptop-admin32</div>
<div class="t" style="left:1097.72px;top:657.50px;font-size:28px;line-height:28px;font-weight:700;color:#5c5c5c;transform:scaleX(1.0300);">ac-aws-dc89</div>
<div class="t" style="left:1520.63px;top:657.50px;font-size:28px;line-height:28px;font-weight:700;color:#5c5c5c;transform:scaleX(0.9843);">Medium</div>
<div class="t" style="left:1710.65px;top:657.50px;font-size:28px;line-height:28px;font-weight:700;color:#5c5c5c;transform:scaleX(0.9458);">Active Directory</div>
<div class="t" style="left:2053.04px;top:657.80px;font-size:28px;line-height:28px;font-weight:700;color:#5c5c5c;transform:scaleX(0.9825);">MFA</div>
<div class="t" style="left:2304.77px;top:654.40px;font-size:29px;line-height:29px;font-weight:700;color:#33b974;transform:scaleX(0.9343);">Allowed</div>
<div class="t" style="left:76.28px;top:756.50px;font-size:28px;line-height:28px;font-weight:700;color:#484848;transform:scaleX(0.9598);">15:50:28.483</div>
<div class="t" style="left:75.78px;top:790.30px;font-size:23.8px;line-height:23.8px;font-weight:400;color:#7c7c7c;transform:scaleX(1.0195);">05/07/2024</div>
<div class="t" style="left:371.88px;top:758.80px;font-size:28px;line-height:28px;font-weight:700;color:#5e6969;transform:scaleX(0.9209);z-index:3">sara.p@ad.acaws.sampleco...</div>
<div class="t" style="left:371.21px;top:794.50px;font-size:22px;line-height:22px;font-weight:400;color:#7e7e7e;letter-spacing:1.2px;transform:scaleX(0.9928);-webkit-text-stroke:0.35px #7e7e7e">acaws.silverfort.io</div>
<div class="t" style="left:795.98px;top:774.80px;font-size:28px;line-height:28px;font-weight:700;color:#5c5c5c;transform:scaleX(1.0099);">Labtop-45</div>
<div class="t" style="left:1097.73px;top:774.80px;font-size:28px;line-height:28px;font-weight:700;color:#5c5c5c;transform:scaleX(1.0178);">ac-aws-rd67</div>
<div class="t" style="left:1520.73px;top:774.80px;font-size:28px;line-height:28px;font-weight:700;color:#5c5c5c;transform:scaleX(0.9333);">Low</div>
<div class="t" style="left:1710.65px;top:774.80px;font-size:28px;line-height:28px;font-weight:700;color:#5c5c5c;transform:scaleX(0.9458);">Active Directory</div>
<div class="t" style="left:2054.07px;top:775.00px;font-size:28px;line-height:28px;font-weight:700;color:#5c5c5c;transform:scaleX(0.9324);">Allow</div>
<div class="t" style="left:2304.77px;top:768.80px;font-size:29px;line-height:29px;font-weight:700;color:#33b974;transform:scaleX(0.9343);">Allowed</div>
<div class="t" style="left:76.28px;top:871.00px;font-size:28px;line-height:28px;font-weight:700;color:#484848;transform:scaleX(0.9598);">15:50:28.482</div>
<div class="t" style="left:75.78px;top:903.60px;font-size:23.8px;line-height:23.8px;font-weight:400;color:#7c7c7c;transform:scaleX(1.0195);">05/07/2024</div>
<div class="t" style="left:370.95px;top:867.40px;font-size:28px;line-height:28px;font-weight:700;color:#5e6969;transform:scaleX(0.9248);z-index:3">kevin.s@ad.acaws.sampleco...</div>
<div class="t" style="left:371.21px;top:903.10px;font-size:22px;line-height:22px;font-weight:400;color:#7e7e7e;letter-spacing:1.2px;transform:scaleX(0.9928);-webkit-text-stroke:0.35px #7e7e7e">acaws.silverfort.io</div>
<div class="t" style="left:796.05px;top:883.50px;font-size:28px;line-height:28px;font-weight:700;color:#5c5c5c;transform:scaleX(0.9772);">laptop-admin4</div>
<div class="t" style="left:1097.77px;top:883.50px;font-size:28px;line-height:28px;font-weight:700;color:#5c5c5c;transform:scaleX(0.9759);">app-accounting-12</div>
<div class="t" style="left:1520.63px;top:883.50px;font-size:28px;line-height:28px;font-weight:700;color:#5c5c5c;transform:scaleX(0.9843);">Medium</div>
<div class="t" style="left:1710.65px;top:883.50px;font-size:28px;line-height:28px;font-weight:700;color:#5c5c5c;transform:scaleX(0.9458);">Active Directory</div>
<div class="t" style="left:2053.04px;top:883.30px;font-size:28px;line-height:28px;font-weight:700;color:#5c5c5c;transform:scaleX(0.9825);">MFA</div>
<div class="t" style="left:2304.77px;top:882.30px;font-size:29px;line-height:29px;font-weight:700;color:#33b974;transform:scaleX(0.9343);">Allowed</div>
<div class="t" style="left:76.30px;top:985.10px;font-size:28px;line-height:28px;font-weight:700;color:#484848;transform:scaleX(0.9482);">15:50:27.471</div>
<div class="t" style="left:75.78px;top:1017.70px;font-size:23.8px;line-height:23.8px;font-weight:400;color:#7c7c7c;transform:scaleX(1.0195);">05/07/2024</div>
<div class="t" style="left:371.88px;top:983.80px;font-size:28px;line-height:28px;font-weight:700;color:#5e6969;transform:scaleX(0.9212);z-index:3">curtis.b@ad.acaws.sampleco...</div>
<div class="t" style="left:371.21px;top:1020.30px;font-size:22px;line-height:22px;font-weight:400;color:#7e7e7e;letter-spacing:1.2px;transform:scaleX(0.9928);-webkit-text-stroke:0.35px #7e7e7e">acaws.silverfort.io</div>
<div class="t" style="left:796.01px;top:999.50px;font-size:28px;line-height:28px;font-weight:700;color:#5c5c5c;transform:scaleX(0.9973);">Labtop-229</div>
<div class="t" style="left:1097.77px;top:999.50px;font-size:28px;line-height:28px;font-weight:700;color:#5c5c5c;transform:scaleX(0.9816);">app-corporate</div>
<div class="t" style="left:1520.73px;top:999.50px;font-size:28px;line-height:28px;font-weight:700;color:#5c5c5c;transform:scaleX(0.9333);">Low</div>
<div class="t" style="left:1710.65px;top:999.50px;font-size:28px;line-height:28px;font-weight:700;color:#5c5c5c;transform:scaleX(0.9458);">Active Directory</div>
<div class="t" style="left:2054.07px;top:1000.60px;font-size:28px;line-height:28px;font-weight:700;color:#5c5c5c;transform:scaleX(0.9324);">Allow</div>
<div class="t" style="left:2304.77px;top:996.00px;font-size:29px;line-height:29px;font-weight:700;color:#33b974;transform:scaleX(0.9343);">Allowed</div>
<div class="t" style="left:76.28px;top:1098.20px;font-size:28px;line-height:28px;font-weight:700;color:#484848;transform:scaleX(0.9598);">15:50:27.470</div>
<div class="t" style="left:75.78px;top:1132.00px;font-size:23.8px;line-height:23.8px;font-weight:400;color:#7c7c7c;transform:scaleX(1.0195);">05/07/2024</div>
<div class="t" style="left:370.94px;top:1095.75px;font-size:28px;line-height:28px;font-weight:700;color:#5e6969;transform:scaleX(0.9303);z-index:3">larry.r@ad.acaws.sampleco...</div>
<div class="t" style="left:371.21px;top:1131.90px;font-size:22px;line-height:22px;font-weight:400;color:#7e7e7e;letter-spacing:1.2px;transform:scaleX(0.9928);-webkit-text-stroke:0.35px #7e7e7e">acaws.silverfort.io</div>
<div class="t" style="left:796.02px;top:1111.40px;font-size:28px;line-height:28px;font-weight:700;color:#5c5c5c;transform:scaleX(0.9905);">Labtop-223</div>
<div class="t" style="left:1097.78px;top:1111.40px;font-size:28px;line-height:28px;font-weight:700;color:#5c5c5c;transform:scaleX(0.9728);">app-hr1</div>
<div class="t" style="left:1520.73px;top:1111.40px;font-size:28px;line-height:28px;font-weight:700;color:#5c5c5c;transform:scaleX(0.9333);">Low</div>
<div class="t" style="left:1710.65px;top:1111.40px;font-size:28px;line-height:28px;font-weight:700;color:#5c5c5c;transform:scaleX(0.9458);">Active Directory</div>
<div class="t" style="left:2054.07px;top:1110.30px;font-size:28px;line-height:28px;font-weight:700;color:#5c5c5c;transform:scaleX(0.9324);">Allow</div>
<div class="t" style="left:2304.77px;top:1109.30px;font-size:29px;line-height:29px;font-weight:700;color:#33b974;transform:scaleX(0.9343);">Allowed</div>
<div class="t" style="left:76.28px;top:1211.90px;font-size:28px;line-height:28px;font-weight:700;color:#484848;transform:scaleX(0.9598);">15:50:27.469</div>
<div class="t" style="left:75.78px;top:1245.60px;font-size:23.8px;line-height:23.8px;font-weight:400;color:#7c7c7c;transform:scaleX(1.0195);">05/07/2024</div>
<div class="t" style="left:370.95px;top:1212.20px;font-size:28px;line-height:28px;font-weight:700;color:#5e6969;transform:scaleX(0.9233);z-index:3">David.a@ad.acaws.sampleco...</div>
<div class="t" style="left:371.21px;top:1247.90px;font-size:22px;line-height:22px;font-weight:400;color:#7e7e7e;letter-spacing:1.2px;transform:scaleX(0.9928);-webkit-text-stroke:0.35px #7e7e7e">acaws.silverfort.io</div>
<div class="t" style="left:796.08px;top:1227.80px;font-size:28px;line-height:28px;font-weight:700;color:#5c5c5c;transform:scaleX(0.9587);">Labtop-admin 8</div>
<div class="t" style="left:1097.73px;top:1227.80px;font-size:28px;line-height:28px;font-weight:700;color:#5c5c5c;transform:scaleX(1.0198);">ac-aws-dc2</div>
<div class="t" style="left:1520.63px;top:1227.80px;font-size:28px;line-height:28px;font-weight:700;color:#5c5c5c;transform:scaleX(0.9843);">Medium</div>
<div class="t" style="left:1710.65px;top:1227.80px;font-size:28px;line-height:28px;font-weight:700;color:#5c5c5c;transform:scaleX(0.9458);">Active Directory</div>
<div class="t" style="left:2054.07px;top:1227.30px;font-size:28px;line-height:28px;font-weight:700;color:#5c5c5c;transform:scaleX(0.9324);">Allow</div>
<div class="t" style="left:2304.77px;top:1223.70px;font-size:29px;line-height:29px;font-weight:700;color:#33b974;transform:scaleX(0.9343);">Allowed</div>
</body></html>
